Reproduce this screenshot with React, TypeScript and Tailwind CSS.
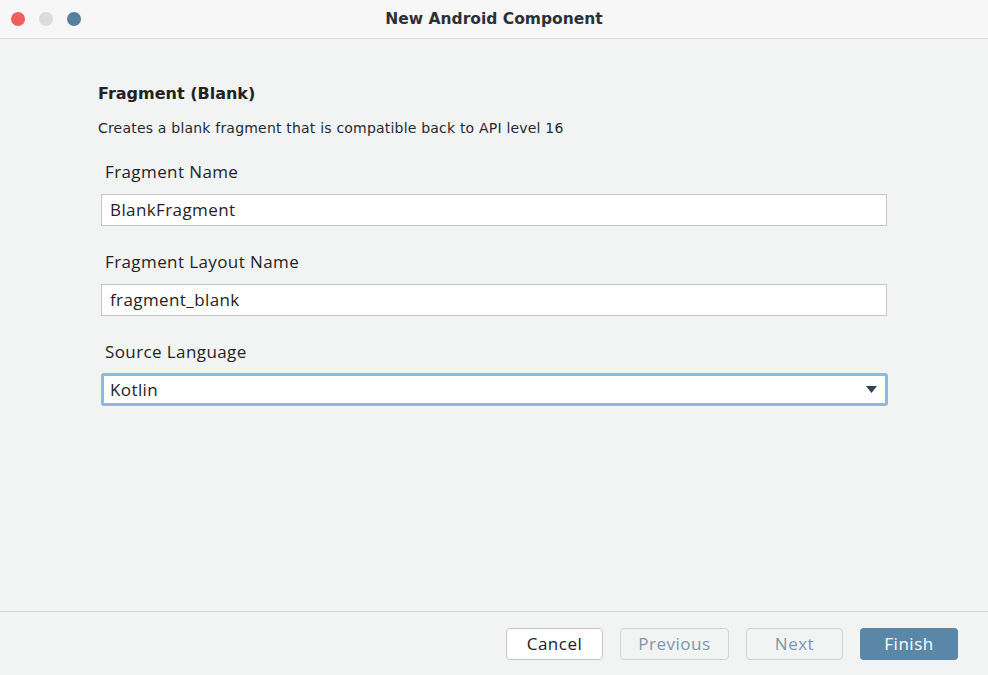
const FONT = "font-['Open_Sans','Liberation_Sans',sans-serif]"
const LUCIDA = "font-['DejaVu_Sans','Liberation_Sans',sans-serif]"

function Field({ label, value }: { label: string; value: string }) {
  return (
    <div className="flex flex-col">
      <label className={`${FONT} pl-[4px] text-[17px] tracking-[0.4px] leading-[22px] text-[#1f2326]`}>{label}</label>
      <div className="mt-[11px] h-[32px] w-[786px] border border-[#c6c6c6] bg-white flex items-center pl-[8px]">
        <span className={`${FONT} text-[17px] tracking-[0.4px] text-[#1f2326]`}>{value}</span>
      </div>
    </div>
  )
}

export default function App() {
  return (
    <div className="w-[988px] h-[675px] flex flex-col bg-[#f2f3f3] overflow-hidden">
      {/* Title bar */}
      <div className="relative h-[39px] shrink-0 bg-[#f7f7f7] border-b border-[#dedede] flex items-center">
        <div className="flex items-center gap-[14px] pl-[11px]">
          <span className="w-[14px] h-[14px] rounded-full bg-[#ef5f5c]" />
          <span className="w-[14px] h-[14px] rounded-full bg-[#dcdcdc]" />
          <span className="w-[14px] h-[14px] rounded-full bg-[#55819f]" />
        </div>
        <div className="absolute inset-0 flex items-center justify-center pt-[2px]">
          <span className={`${LUCIDA} font-bold text-[15.5px] text-[#2b3136]`}>New Android Component</span>
        </div>
      </div>

      {/* Content */}
      <div className="flex-1 pl-[98px] pt-[45px]">
        <h1 className={`${LUCIDA} font-bold text-[16px] leading-[20px] text-[#222]`}>Fragment (Blank)</h1>
        <p className={`${LUCIDA} mt-[15px] text-[14px] tracking-[0.2px] leading-[18px] text-[#1f2a33]`}>
          Creates a blank fragment that is compatible back to API level 16
        </p>
        <div className="ml-[3px] mt-[24px] flex flex-col gap-[25px]">
          <Field label="Fragment Name" value="BlankFragment" />
          <Field label="Fragment Layout Name" value="fragment_blank" />
          <div className="flex flex-col">
            <label className={`${FONT} pl-[4px] text-[17px] tracking-[0.4px] leading-[22px] text-[#1f2326]`}>Source Language</label>
            <div className="mt-[10px] h-[33px] w-[787px] rounded-[3px] border-[3px] border-[#8bb9e1] bg-white flex items-center justify-between pl-[6px] pr-[8px]">
              <span className={`${FONT} text-[17px] tracking-[0.4px] text-[#1f2326]`}>Kotlin</span>
              <svg width="11" height="7" viewBox="0 0 11 7">
                <path d="M0 0H11L5.5 7Z" fill="#34434f" />
              </svg>
            </div>
          </div>
        </div>
      </div>

      {/* Footer */}
      <div className="h-[64px] shrink-0 border-t border-[#d6d6d6] flex items-start justify-end gap-[17px] pr-[30px] pt-[16px]">
        <button className={`${FONT} w-[97px] h-[32px] rounded-[4px] border border-[#c6c6c6] bg-white text-[17px] tracking-[0.5px] text-[#1c2227]`}>Cancel</button>
        <button className={`${FONT} w-[109px] h-[32px] rounded-[4px] border border-[#d4d4d4] text-[17px] tracking-[0.5px] text-[#7c97ab]`}>Previous</button>
        <button className={`${FONT} w-[97px] h-[32px] rounded-[4px] border border-[#d4d4d4] text-[17px] tracking-[0.5px] text-[#7c97ab]`}>Next</button>
        <button className={`${FONT} w-[98px] h-[32px] rounded-[4px] bg-[#5a87a8] text-[17px] tracking-[0.5px] text-white`}>Finish</button>
      </div>
    </div>
  )
}
